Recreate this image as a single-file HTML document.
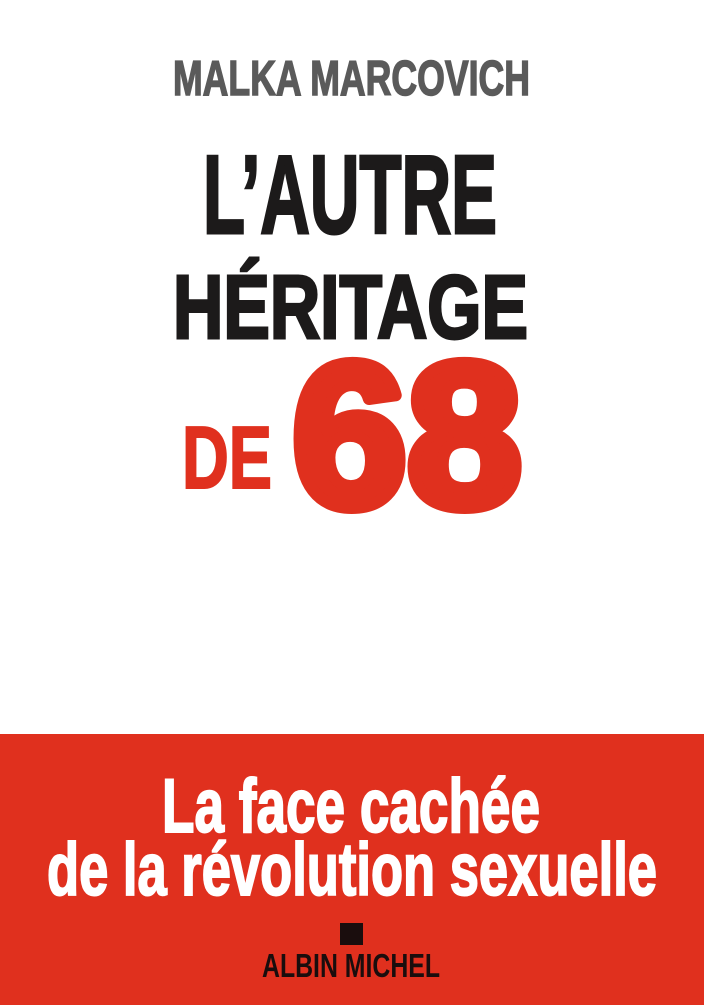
<!DOCTYPE html>
<html><head><meta charset="utf-8"><style>
html,body{margin:0;padding:0;background:#fff;}
svg{display:block;}
</style></head><body>
<svg width="704" height="1005" viewBox="0 0 704 1005" xmlns="http://www.w3.org/2000/svg">
<rect x="0" y="0" width="704" height="1005" fill="#ffffff"/>
<rect x="0" y="734" width="704" height="271" fill="#e0301e"/>
<g font-family="'Liberation Sans Narrow','Liberation Sans',sans-serif" font-weight="bold">
<text x="173" y="95" font-size="49" fill="#5a5a5a" stroke="#5a5a5a" stroke-width="1.5" textLength="357" lengthAdjust="spacingAndGlyphs">MALKA MARCOVICH</text>
<text x="203" y="233" font-size="111" fill="#1c1a1a" stroke="#1c1a1a" stroke-width="3" textLength="294" lengthAdjust="spacingAndGlyphs">L’AUTRE</text>
<text x="173" y="338" font-size="90" fill="#1c1a1a" stroke="#1c1a1a" stroke-width="3" textLength="355" lengthAdjust="spacingAndGlyphs">HÉRITAGE</text>
<text x="182" y="488" font-size="88" fill="#e0301e" stroke="#e0301e" stroke-width="2" textLength="90" lengthAdjust="spacingAndGlyphs">DE</text>
<text x="292" y="506" font-size="205" fill="#e0301e" stroke="#e0301e" stroke-width="12" stroke-linejoin="round" textLength="230" lengthAdjust="spacingAndGlyphs">68</text>
<text x="162" y="832" font-size="76" fill="#ffffff" stroke="#ffffff" stroke-width="2" textLength="378" lengthAdjust="spacingAndGlyphs">La face cachée</text>
<text x="47" y="895" font-size="74" fill="#ffffff" stroke="#ffffff" stroke-width="2" textLength="610" lengthAdjust="spacingAndGlyphs">de la révolution sexuelle</text>
<rect x="340" y="923" width="23" height="22" fill="#1a0d0d"/>
<text x="262" y="977" font-size="33" fill="#1a0d0d" textLength="178" lengthAdjust="spacingAndGlyphs">ALBIN MICHEL</text>
</g>
</svg>
</body></html>
